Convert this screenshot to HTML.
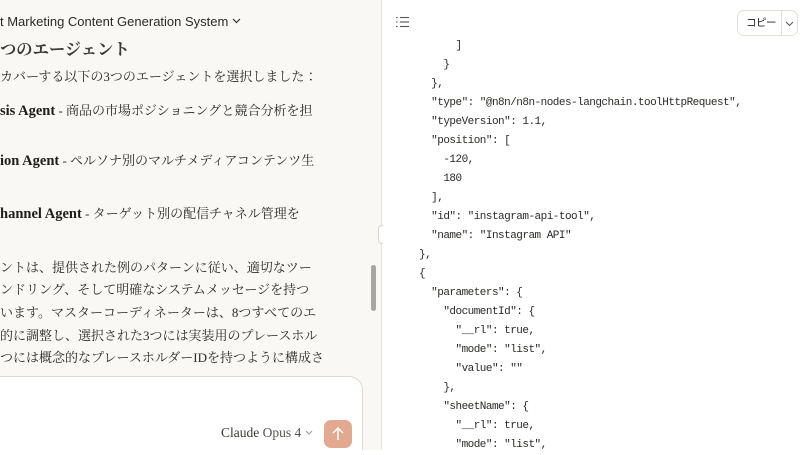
<!DOCTYPE html>
<html><head><meta charset="utf-8"><style>
*{margin:0;padding:0;box-sizing:border-box}
body{width:800px;height:450px;overflow:hidden;position:relative;background:#fff;font-family:"Liberation Serif","Noto Serif CJK JP",serif;color:#2b2a27}
#left{position:absolute;left:0;top:0;width:382px;height:450px;background:#f9f8f5;border-right:1px solid #e6e3dc;overflow:hidden}
#left .t{position:absolute;left:0;white-space:nowrap;font-size:13px;line-height:20px}
.title{font-family:"Liberation Sans","Noto Sans CJK JP",sans-serif;font-size:13px!important;top:12px;color:#2b2a27}
.h{font-size:16.3px!important;font-weight:bold;color:#3a3935}
b{font-weight:bold;color:#1f1e1b;font-size:14.5px}
#input{position:absolute;left:-20px;top:376px;width:383px;height:90px;background:#fff;border:1px solid #dedbd3;border-radius:14px}
#right{position:absolute;left:383px;top:0;width:417px;height:450px;background:#fff}
pre{position:absolute;left:36px;top:37px;font-family:"Liberation Mono",monospace;font-size:11px;letter-spacing:-0.52px;line-height:19px;color:#2b2a27}
</style></head><body>
<div id="left">
<div class="t title">t Marketing Content Generation System <svg width="9" height="6" viewBox="0 0 9 6" style="vertical-align:2px"><path d="M1 1l3.5 3.5L8 1" stroke="#333" stroke-width="1.2" fill="none"/></svg></div>
<div class="t h" style="top:40px">つのエージェント</div>
<div class="t" style="top:67px">カバーする以下の3つのエージェントを選択しました：</div>
<div class="t" style="top:101px"><b>sis Agent</b> - 商品の市場ポジショニングと競合分析を担</div>
<div class="t" style="top:151px"><b>ion Agent</b> - ペルソナ別のマルチメディアコンテンツ生</div>
<div class="t" style="top:204px"><b>hannel Agent</b> - ターゲット別の配信チャネル管理を</div>
<div class="t" style="top:258px">ントは、提供された例のパターンに従い、適切なツー</div>
<div class="t" style="top:280px">ンドリング、そして明確なシステムメッセージを持つ</div>
<div class="t" style="top:303px">います。マスターコーディネーターは、8つすべてのエ</div>
<div class="t" style="top:326px">的に調整し、選択された3つには実装用のプレースホル</div>
<div class="t" style="top:348px">つには概念的なプレースホルダーIDを持つように構成さ</div>
<div style="position:absolute;left:371px;top:265px;width:5px;height:46px;background:#a8a6a1;border-radius:3px"></div>
<div id="input"></div>
<div style="position:absolute;left:221px;top:425px;font-size:13.5px;color:#3a3935;white-space:nowrap">Claude <span style="color:#55534e">Opus 4</span> <svg width="8" height="5" viewBox="0 0 8 5" style="vertical-align:2px"><path d="M1 1l3 3 3-3" stroke="#999" stroke-width="1" fill="none"/></svg></div>
<div style="position:absolute;left:324px;top:420px;width:28px;height:28px;border-radius:7px;background:#e3a890"><svg width="28" height="28" viewBox="0 0 28 28"><path d="M14 20V8M9 13l5-5 5 5" stroke="#fff" stroke-width="1.5" fill="none"/></svg></div>
</div>
<div style="position:absolute;left:378px;top:225px;width:8px;height:19px;background:#fff;border:1px solid #d8d5ce;border-radius:4px"></div>
<div id="right">
<svg style="position:absolute;left:13px;top:16px" width="14" height="12" viewBox="0 0 14 12"><g stroke="#555" stroke-width="1.1"><line x1="0" y1="1.5" x2="1.5" y2="1.5"/><line x1="4" y1="1.5" x2="13" y2="1.5"/><line x1="0" y1="6" x2="1.5" y2="6"/><line x1="4" y1="6" x2="13" y2="6"/><line x1="0" y1="10.5" x2="1.5" y2="10.5"/><line x1="4" y1="10.5" x2="13" y2="10.5"/></g></svg>
<div style="position:absolute;left:354px;top:10px;width:61px;height:26px;border:1px solid #e3e0da;border-radius:7px;font-family:'Noto Sans CJK JP',sans-serif;font-size:10.5px;color:#222">
<span style="position:absolute;left:8px;top:4px;letter-spacing:-0.5px;white-space:nowrap">コピー</span>
<span style="position:absolute;left:43px;top:0;width:1px;height:24px;background:#e3e0da"></span>
<svg style="position:absolute;left:47px;top:10px" width="9" height="6" viewBox="0 0 9 6"><path d="M1 1l3.5 3.5L8 1" stroke="#555" stroke-width="1" fill="none"/></svg></div>
<pre>      ]
    }
  },
  "type": "@n8n/n8n-nodes-langchain.toolHttpRequest",
  "typeVersion": 1.1,
  "position": [
    -120,
    180
  ],
  "id": "instagram-api-tool",
  "name": "Instagram API"
},
{
  "parameters": {
    "documentId": {
      "__rl": true,
      "mode": "list",
      "value": ""
    },
    "sheetName": {
      "__rl": true,
      "mode": "list",</pre>
</div>
</body></html>
